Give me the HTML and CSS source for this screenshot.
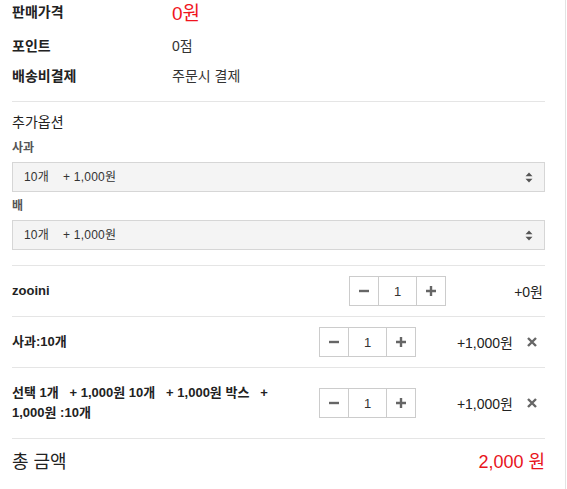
FILE: index.html
```html
<!DOCTYPE html>
<html>
<head>
  <meta charset="UTF-8">
  <meta name="viewport" content="width=device-width, initial-scale=1.0">
  <title>상품 주문</title>
  <link rel="stylesheet" href="styles.css">
</head>
<body>
  <div class="page">

    <!-- 가격 정보 -->
    <div class="info">
      <div class="info-row first">
        <span class="info-label">판매가격</span>
        <span class="info-value sale">0원</span>
      </div>
      <div class="info-row">
        <span class="info-label">포인트</span>
        <span class="info-value">0점</span>
      </div>
      <div class="info-row">
        <span class="info-label">배송비결제</span>
        <span class="info-value">주문시 결제</span>
      </div>
    </div>

    <!-- 추가옵션 -->
    <div class="options">
      <div class="options-title">추가옵션</div>
      <div class="option">
        <label class="option-label">사과</label>
        <div class="select-wrap">
          <select class="option-select">
            <option>10개&nbsp;&nbsp;&nbsp; + 1,000원</option>
          </select>
          <svg class="select-arrow" width="8" height="11" viewBox="0 0 8 11"><path d="M4 0.5L7.5 4.2H0.5z M4 10.5L0.5 6.8H7.5z" fill="#555"/></svg>
        </div>
      </div>
      <div class="option">
        <label class="option-label">배</label>
        <div class="select-wrap">
          <select class="option-select">
            <option>10개&nbsp;&nbsp;&nbsp; + 1,000원</option>
          </select>
          <svg class="select-arrow" width="8" height="11" viewBox="0 0 8 11"><path d="M4 0.5L7.5 4.2H0.5z M4 10.5L0.5 6.8H7.5z" fill="#555"/></svg>
        </div>
      </div>
    </div>

    <!-- 선택한 상품 -->
    <ul class="selected">
      <li class="item">
        <div class="item-name">zooini</div>
        <div class="qty">
          <button class="qty-btn"><svg width="12" height="12" viewBox="0 0 12 12"><path d="M1 6h10" stroke="#666" stroke-width="2.4"/></svg></button>
          <input class="qty-input" type="text" value="1">
          <button class="qty-btn"><svg width="12" height="12" viewBox="0 0 12 12"><path d="M1 6h10M6 1v10" stroke="#666" stroke-width="2.4"/></svg></button>
        </div>
        <div class="item-price">+0원</div>
      </li>
      <li class="item">
        <div class="item-name">사과:10개</div>
        <div class="qty">
          <button class="qty-btn"><svg width="12" height="12" viewBox="0 0 12 12"><path d="M1 6h10" stroke="#666" stroke-width="2.4"/></svg></button>
          <input class="qty-input" type="text" value="1">
          <button class="qty-btn"><svg width="12" height="12" viewBox="0 0 12 12"><path d="M1 6h10M6 1v10" stroke="#666" stroke-width="2.4"/></svg></button>
        </div>
        <div class="item-price">+1,000원</div>
        <button class="item-del"><svg width="10" height="10" viewBox="0 0 10 10"><path d="M1 1l8 8M9 1l-8 8" stroke="#666" stroke-width="2.4"/></svg></button>
      </li>
      <li class="item">
        <div class="item-name">선택 1개&nbsp;&nbsp; + 1,000원 10개&nbsp;&nbsp; + 1,000원 박스&nbsp;&nbsp; + 1,000원 :10개</div>
        <div class="qty">
          <button class="qty-btn"><svg width="12" height="12" viewBox="0 0 12 12"><path d="M1 6h10" stroke="#666" stroke-width="2.4"/></svg></button>
          <input class="qty-input" type="text" value="1">
          <button class="qty-btn"><svg width="12" height="12" viewBox="0 0 12 12"><path d="M1 6h10M6 1v10" stroke="#666" stroke-width="2.4"/></svg></button>
        </div>
        <div class="item-price">+1,000원</div>
        <button class="item-del"><svg width="10" height="10" viewBox="0 0 10 10"><path d="M1 1l8 8M9 1l-8 8" stroke="#666" stroke-width="2.4"/></svg></button>
      </li>
    </ul>

    <div class="total">
      <span class="total-label">총 금액</span>
      <span class="total-price">2,000 원</span>
    </div>

  </div>
</body>
</html>
```

FILE: styles.css
```css
body {
  margin: 0;
  background-color: #ffffff;
  font-family: "Liberation Sans", "Noto Sans CJK KR", sans-serif;
  color: #333333;
}

.page {
  box-sizing: border-box;
  width: 566px;
  min-height: 489px;
  padding: 0 20px 0 12px;
  border-right: 1px solid #e3e3e3;
}

/* 가격 정보 */
.info {
  padding-bottom: 11px;
  border-bottom: 1px solid #e5e5e5;
}

.info-row {
  display: flex;
  align-items: center;
  height: 30px;
}

.info-row.first {
  height: 22px;
  margin-bottom: 8px;
}

.info-label {
  width: 160px;
  font-size: 14px;
  font-weight: bold;
  color: #222222;
}

.info-value {
  font-size: 14px;
  color: #333333;
}

.info-value.sale {
  font-size: 19px;
  color: #f0141e;
}

/* 추가옵션 */
.options {
  padding: 8px 0 15px;
  border-bottom: 1px solid #e5e5e5;
}

.options-title {
  font-size: 14px;
  line-height: 24px;
  color: #222222;
}

.option-label {
  display: block;
  font-size: 12px;
  font-weight: bold;
  line-height: 28px;
  color: #555555;
}

.select-wrap {
  position: relative;
}

.option-select {
  -webkit-appearance: none;
  appearance: none;
  display: block;
  box-sizing: border-box;
  width: 100%;
  height: 30px;
  margin: 0;
  padding: 0 11px;
  border: 1px solid #d6d6d6;
  border-radius: 0;
  background-color: #f4f4f4;
  font-family: inherit;
  font-size: 12px;
  letter-spacing: 0.2px;
  color: #333333;
}

.select-arrow {
  position: absolute;
  top: 10px;
  right: 12px;
  pointer-events: none;
}

/* 선택한 상품 */
.selected {
  list-style: none;
  margin: 0;
  padding: 0;
}

.item {
  display: flex;
  align-items: center;
  padding: 10px 0;
  border-bottom: 1px solid #e5e5e5;
}

.item-name {
  flex: 1;
  padding: 5px 10px 5px 0;
  font-size: 13px;
  font-weight: bold;
  line-height: 20px;
  word-break: keep-all;
  color: #222222;
}

.qty {
  display: flex;
  height: 30px;
  border: 1px solid #cccccc;
  box-sizing: border-box;
}

.qty-btn {
  display: flex;
  align-items: center;
  justify-content: center;
  width: 28px;
  padding: 0;
  border: none;
  background-color: #ffffff;
}

.qty-input {
  box-sizing: border-box;
  width: 39px;
  margin: 0;
  padding: 0;
  border: none;
  border-left: 1px solid #cccccc;
  border-right: 1px solid #cccccc;
  font-family: inherit;
  font-size: 13px;
  text-align: center;
  color: #333333;
}

.item-price {
  box-sizing: border-box;
  width: 99px;
  padding-right: 2px;
  text-align: right;
  font-size: 14px;
  color: #222222;
}

.item-del {
  display: flex;
  align-items: center;
  justify-content: flex-end;
  width: 30px;
  padding: 0 8px 0 0;
  border: none;
  background: none;
}

/* 총 금액 */
.total {
  display: flex;
  justify-content: space-between;
  padding-top: 11px;
  font-size: 18px;
  line-height: 24px;
}

.total-label {
  color: #222222;
}

.total-price {
  color: #e8141b;
}
```
